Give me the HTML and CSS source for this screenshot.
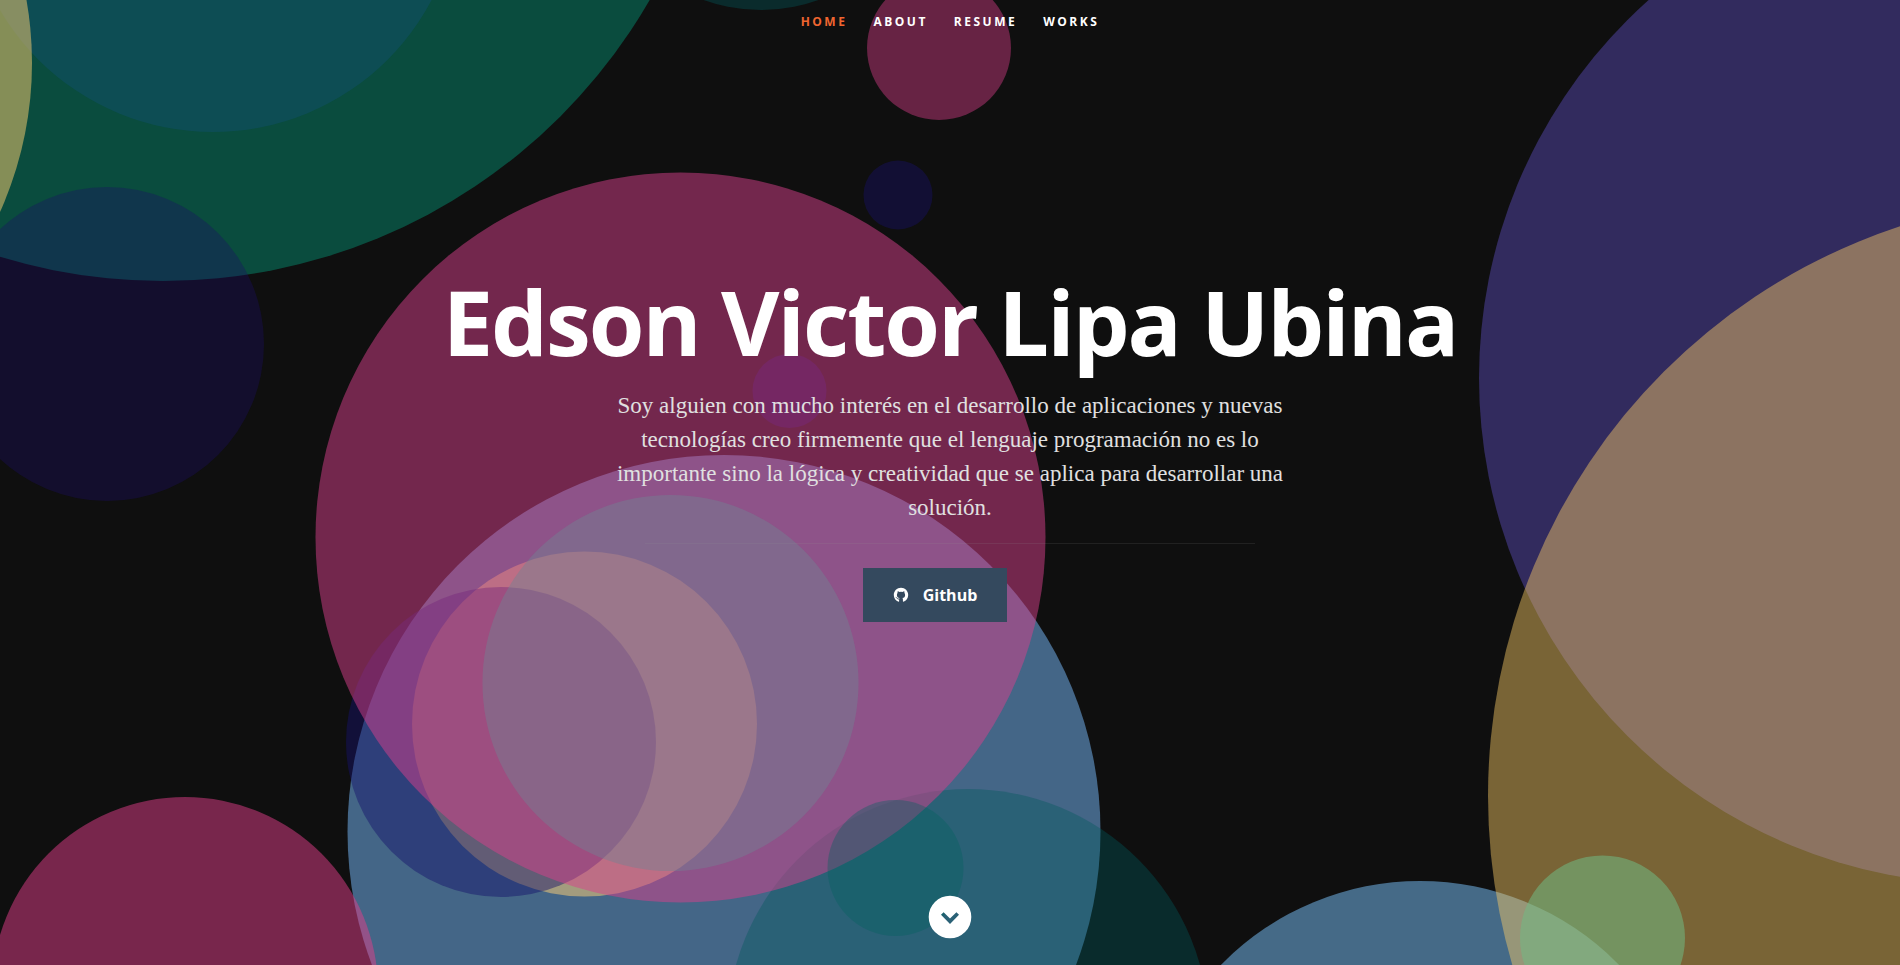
FILE: index.html
```html
<!DOCTYPE html>
<html lang="es">
<head>
<meta charset="utf-8">
<title>Edson Victor Lipa Ubina</title>
<link rel="stylesheet" href="styles.css">
</head>
<body>
<header class="hero" id="home">
  <svg class="bubbles" viewBox="0 0 1900 965" preserveAspectRatio="xMidYMid slice" aria-hidden="true">
    <circle cx="163" cy="-281" r="562" fill="#068a6e" fill-opacity=".5"/>
    <circle cx="213" cy="-115" r="247" fill="#114f75" fill-opacity=".4"/>
    <circle cx="-331" cy="63" r="363" fill="#f8cb6f" fill-opacity=".52"/>
    <circle cx="107" cy="344" r="157" fill="#1c0e66" fill-opacity=".35"/>
    <circle cx="761" cy="-160" r="170" fill="#035a5c" fill-opacity=".38"/>
    <circle cx="939" cy="48" r="72" fill="#ea4293" fill-opacity=".4"/>
    <circle cx="898" cy="195" r="34.5" fill="#18105e" fill-opacity=".48"/>
    <circle cx="789.5" cy="391" r="37" fill="#18106a" fill-opacity=".48"/>
    <circle cx="724" cy="831.5" r="376.5" fill="#7abeff" fill-opacity=".5"/>
    <circle cx="584.5" cy="724" r="172.5" fill="#e2bf78" fill-opacity=".6"/>
    <circle cx="501" cy="742" r="155" fill="#16126a" fill-opacity=".46"/>
    <circle cx="968" cy="1030" r="241" fill="#015a5d" fill-opacity=".38"/>
    <circle cx="680.5" cy="537.5" r="365" fill="#d8408c" fill-opacity=".5"/>
    <circle cx="185" cy="990" r="193" fill="#e23e8a" fill-opacity=".5"/>
    <circle cx="670.5" cy="683" r="188" fill="#728393" fill-opacity=".45"/>
    <circle cx="895.5" cy="868" r="68" fill="#03635f" fill-opacity=".37"/>
    <circle cx="1985" cy="378" r="506" fill="#5648ae" fill-opacity=".5"/>
    <circle cx="1420" cy="1159" r="278" fill="#7cc6ff" fill-opacity=".5"/>
    <circle cx="2088" cy="796" r="600" fill="#facd67" fill-opacity=".45"/>
    <circle cx="1602.5" cy="938" r="82.5" fill="#71b983" fill-opacity=".55"/>
  </svg>

  <nav class="nav" aria-label="Principal">
    <ul class="nav-list">
      <li><a class="nav-link nav-link-current" href="#home">Home</a></li>
      <li><a class="nav-link" href="#about">About</a></li>
      <li><a class="nav-link" href="#resume">Resume</a></li>
      <li><a class="nav-link" href="#portfolio">Works</a></li>
    </ul>
  </nav>

  <div class="banner">
    <h1 class="title">Edson Victor Lipa Ubina</h1>
    <p class="intro">Soy alguien con mucho interés en el desarrollo de aplicaciones y nuevas tecnologías creo firmemente que el lenguaje programación no es lo importante sino la lógica y creatividad que se aplica para desarrollar una solución.</p>
    <hr class="rule">
    <a class="button" href="#github">
      <svg class="button-icon" viewBox="0 0 16 16" aria-hidden="true"><path fill="currentColor" d="M8 .8C4 .8.800 4 .800 8c0 3.100 2 5.800 4.700 6.800.4.1.6-.2.6-.5v-2.100c0-.5.2-.9.500-1.200-1.700-.3-2.700-1.200-2.700-3.100 0-.8.3-1.400.7-1.900-.1-.4-.1-1.200.1-1.800.7 0 1.300.4 1.800.8a6.500 6.500 0 0 1 3 0c.5-.4 1.100-.8 1.800-.8.2.6.2 1.400.1 1.800.4.5.7 1.100.7 1.900 0 1.900-1 2.800-2.700 3.100.3.3.5.7.5 1.200v2.100c0 .3.2.6.6.5 2.700-1 4.700-3.700 4.700-6.800 0-4-3.200-7.200-7.200-7.200z"/><path fill="none" stroke="#34495e" stroke-width=".9" d="M2.800 10.400c1.500.2 1.200 1.900 3.400 1.700"/></svg>
      <span>Github</span>
    </a>
  </div>

  <a class="scroll" href="#about" aria-label="About">
    <svg class="scroll-icon" viewBox="0 0 44 44" aria-hidden="true"><path fill="#fff" fill-rule="evenodd" d="M22 .7a21.300 21.300 0 1 0 0 42.600 21.300 21.300 0 0 0 0-42.600zM13 19.800l2.600-2.600 6.400 6.300 6.400-6.300 2.600 2.600-9 9.100z"/></svg>
  </a>
</header>
</body>
</html>
```
FILE: styles.css
```css
* {
  box-sizing: border-box;
}

body {
  margin: 0;
  background: #0f0f0f;
  color: #fff;
  font-family: "Open Sans", "Noto Sans", sans-serif;
}

.hero {
  position: relative;
  display: flex;
  flex-direction: column;
  align-items: center;
  min-height: 100vh;
  overflow: hidden;
  text-align: center;
}

.bubbles {
  position: absolute;
  inset: 0;
  width: 100%;
  height: 100%;
}

.nav,
.banner,
.scroll {
  position: relative;
}

.nav-list {
  display: flex;
  margin: 0;
  padding: 0;
  list-style: none;
}

.nav-link {
  display: block;
  padding: 0 13px;
  color: #fff;
  font-size: 12px;
  font-weight: 700;
  line-height: 44px;
  letter-spacing: 2.5px;
  text-transform: uppercase;
  text-decoration: none;
}

.nav-link-current {
  color: #f06530;
}

.banner {
  display: flex;
  flex-direction: column;
  align-items: center;
  margin: auto 0;
  padding: 0 24px 46px;
}

.title {
  margin: 0 0 18px;
  font-size: 90px;
  font-weight: 700;
  line-height: 100px;
  letter-spacing: -2px;
}

.intro {
  max-width: 680px;
  margin: 0;
  color: #e0e0e0;
  font-family: "Liberation Serif", serif;
  font-size: 23px;
  line-height: 34px;
}

.rule {
  width: 610px;
  max-width: 100%;
  margin: 18px 0 24px;
  border: 0;
  border-top: 1px solid rgba(150, 150, 150, 0.14);
}

.button {
  display: flex;
  align-items: center;
  gap: 14px;
  margin-right: 30px;
  padding: 15px 30px;
  background: #34495e;
  color: #fff;
  font-size: 16px;
  font-weight: 700;
  line-height: 24px;
  text-decoration: none;
}

.button-icon {
  width: 16px;
  height: 16px;
}

.scroll {
  margin-bottom: 26px;
}

.scroll-icon {
  display: block;
  width: 44px;
  height: 44px;
}
```
